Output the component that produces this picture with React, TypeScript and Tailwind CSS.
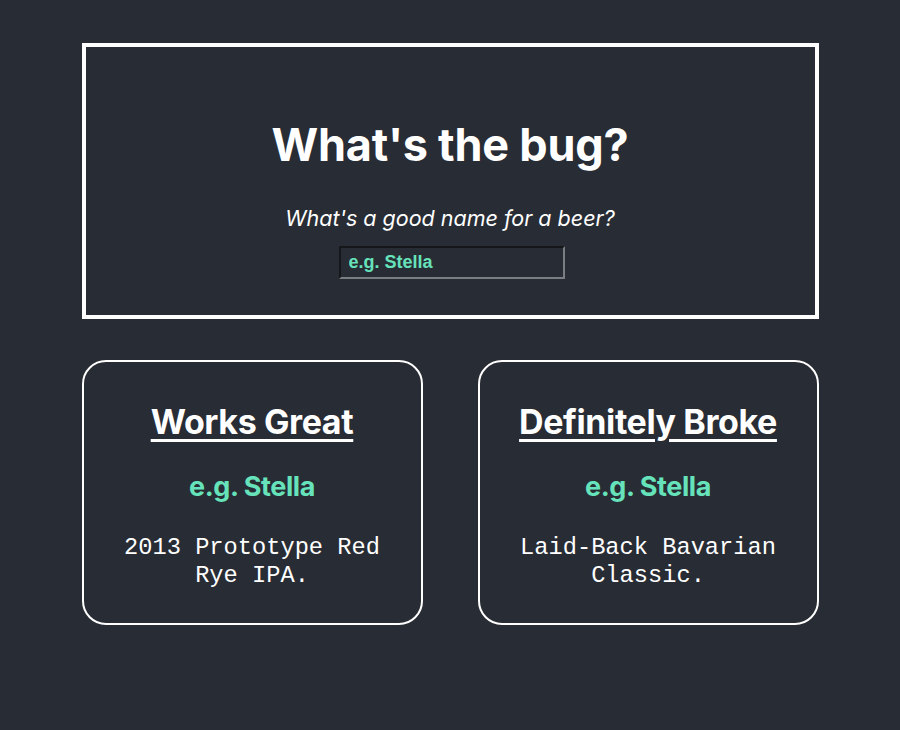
import React from "react";

export default function App() {
  return (
    <div className="min-h-[730px] w-full bg-[#282c34] text-white" style={{ fontFamily: "Inter, 'Noto Sans', sans-serif" }}>
      <div className="mx-auto w-[737px] pt-[43px]">
        <div className="flex h-[276px] flex-col items-center border-4 border-white pt-[68px]">
          <h1 className="text-[45px] font-bold leading-[60px] tracking-[-0.2px]">What's the bug?</h1>
          <p className="mt-[29px] text-[21.5px] italic leading-[28px]">What's a good name for a beer?</p>
          <input
            readOnly
            value="e.g. Stella"
            className="ml-[3px] mt-[14px] h-[33px] w-[226px] border-2 border-t-[#15171b] border-l-[#15171b] border-b-[#7a7d82] border-r-[#7a7d82] bg-[#282c34] px-[8px] text-[18px] font-bold text-[#66e3bb] outline-none"
            style={{ fontFamily: "'Liberation Sans', Arial, sans-serif" }}
          />
        </div>
        <div className="mt-[41px] grid grid-cols-2 gap-[55px]">
          <Card title="Works Great" lines={["2013 Prototype Red", "Rye IPA."]} />
          <Card title="Definitely Broke" lines={["Laid-Back Bavarian", "Classic."]} />
        </div>
      </div>
    </div>
  );
}

function Card({ title, lines }: { title: string; lines: string[] }) {
  return (
    <div className="flex h-[265px] flex-col items-center rounded-[24px] border-2 border-white pt-[38px]">
      <h2 className="text-[34px] font-bold leading-[44px] underline decoration-[3px] underline-offset-[5px] tracking-[-0.4px]">{title}</h2>
      <div className="mt-[25px] text-[27px] font-bold leading-[36px] text-[#66e3bb] tracking-[-0.4px]">e.g. Stella</div>
      <div className="mt-[29px] text-center text-[23.7px] leading-[28px]" style={{ fontFamily: "'Liberation Mono', 'Courier New', monospace" }}>
        {lines.map((l) => (
          <div key={l}>{l}</div>
        ))}
      </div>
    </div>
  );
}
